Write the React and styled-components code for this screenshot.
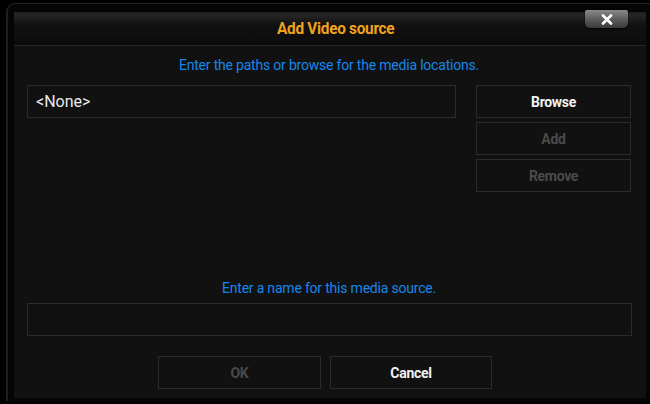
import React from 'react';
import styled, { createGlobalStyle } from 'styled-components';

const Global = createGlobalStyle`
  html, body {
    margin: 0;
    padding: 0;
    background: #000;
    width: 650px;
    height: 404px;
    overflow: hidden;
    font-family: Roboto, "Liberation Sans", sans-serif;
  }
`;

const Frame = styled.div`
  position: relative;
  box-sizing: border-box;
  width: 644px;
  height: 398px;
  margin: 3px 0 0 6px;
  border-top: 1px solid #1d2229;
  border-left: 2px solid #1a1f26;
  border-radius: 9px 0 0 0;
  padding: 8px 4px 3px 6px;
  background: #050505;
`;

const Panel = styled.div`
  box-sizing: border-box;
  height: 100%;
  background: #111111;
  display: flex;
  flex-direction: column;
  padding: 0 6px 0 13px;
`;

const Header = styled.div`
  height: 33px;
  margin: 0 -6px 0 -13px;
  display: flex;
  align-items: center;
  justify-content: center;
  background: linear-gradient(#1c1c1c 0%, #262626 8%, #111 40%, #0c0c0c 100%);
  border-bottom: 1px solid #262626;
`;

const Title = styled.div`
  color: #f0a21d;
  font-weight: 700;
  font-size: 16.5px;
  letter-spacing: -0.3px;
  transform: scaleX(0.93);
  padding-left: 12px;
`;

const CloseButton = styled.div`
  position: absolute;
  top: 6px;
  right: 22px;
  width: 43px;
  height: 18px;
  border-radius: 2px 2px 5px 5px;
  background: linear-gradient(#8a8a8a, #555 60%, #3a3a3a);
  box-shadow: 0 1px 2px #000;
  display: flex;
  align-items: center;
  justify-content: center;
`;

const Hint = styled.div`
  color: #1687ea;
  font-size: 14px;
  line-height: 16px;
  text-align: center;
  padding-right: 9px;
  margin-top: ${p => p.$top}px;
  letter-spacing: -0.2px;
`;

const TopRow = styled.div`
  display: flex;
  gap: 20px;
  margin-top: 12px;
`;

const PathBox = styled.div`
  box-sizing: border-box;
  width: 429px;
  height: 33px;
  border: 1px solid #2b2b2b;
  color: #eaeaea;
  font-size: 16px;
  display: flex;
  align-items: center;
  padding-left: 8px;
`;

const ButtonCol = styled.div`
  display: flex;
  flex-direction: column;
  gap: 4px;
`;

const Button = styled.div`
  box-sizing: border-box;
  width: ${p => p.$w}px;
  height: 33px;
  border: 1px solid #2b2b2b;
  display: flex;
  align-items: center;
  justify-content: center;
  font-weight: 700;
  font-size: 14px;
  color: ${p => (p.$off ? '#4a4a4a' : '#f2f2f2')};
  letter-spacing: -0.3px;
`;

const NameBox = styled.div`
  box-sizing: border-box;
  width: 605px;
  height: 33px;
  border: 1px solid #2b2b2b;
  margin-top: 7px;
`;

const BottomRow = styled.div`
  display: flex;
  gap: 9px;
  margin: 20px 0 0 131px;
`;

export default function App() {
  return (
    <>
      <Global />
      <Frame>
        <Panel>
          <Header>
            <Title>Add Video source</Title>
          </Header>
          <Hint $top={11}>Enter the paths or browse for the media locations.</Hint>
          <TopRow>
            <PathBox>&lt;None&gt;</PathBox>
            <ButtonCol>
              <Button $w={155}>Browse</Button>
              <Button $w={155} $off>Add</Button>
              <Button $w={155} $off>Remove</Button>
            </ButtonCol>
          </TopRow>
          <Hint $top={88}>Enter a name for this media source.</Hint>
          <NameBox />
          <BottomRow>
            <Button $w={163} $off>OK</Button>
            <Button $w={162}>Cancel</Button>
          </BottomRow>
        </Panel>
        <CloseButton>
          <svg width="12" height="11" viewBox="0 0 12 11">
            <path d="M2 1.5 L10 9.5 M10 1.5 L2 9.5" stroke="#fff" strokeWidth="2.6" strokeLinecap="round" />
          </svg>
        </CloseButton>
      </Frame>
    </>
  );
}
